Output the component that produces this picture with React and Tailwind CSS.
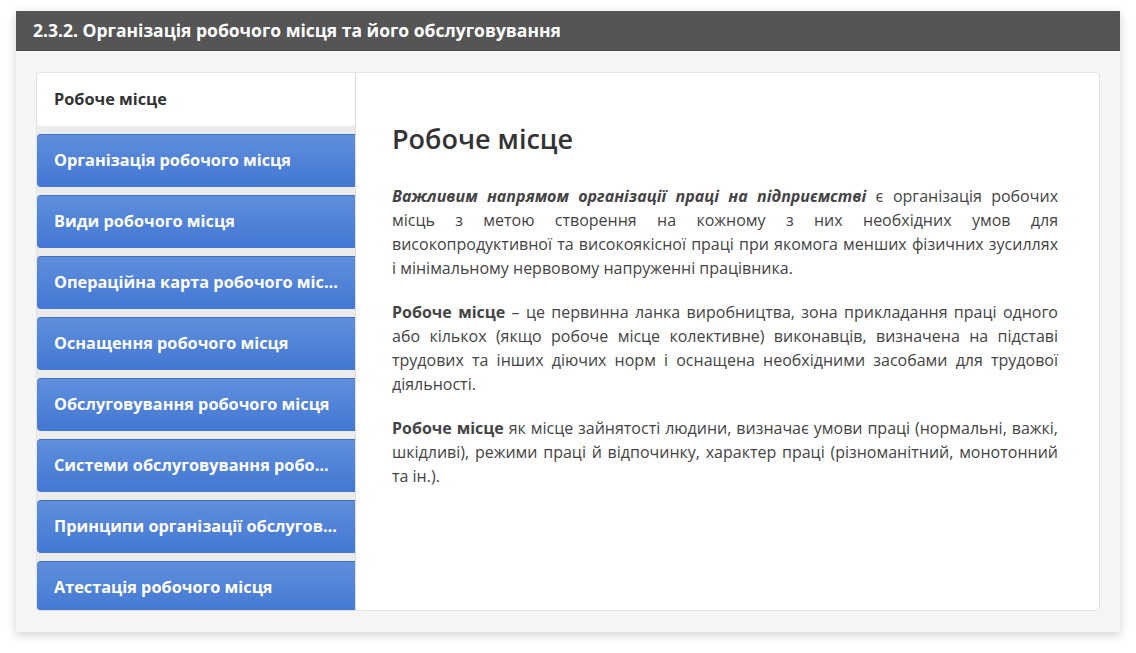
const tabs = [
  'Організація робочого місця',
  'Види робочого місця',
  'Операційна карта робочого місця',
  'Оснащення робочого місця',
  'Обслуговування робочого місця',
  'Системи обслуговування робочих місць',
  'Принципи організації обслуговування',
  'Атестація робочого місця',
];

export default function App() {
  return (
    <div className="min-h-screen bg-white pt-[11px] px-4 pb-5" style={{ fontFamily: '"Open Sans", "Noto Sans", sans-serif' }}>
      <div className="w-[1104px] bg-[#f5f5f5] shadow-[0_3px_10px_rgba(0,0,0,0.18)]">
        <div className="h-10 bg-[#555555] flex items-center px-[17px] border-b border-[#4a4a4a]">
          <h2 className="text-white font-bold text-[17.5px]">2.3.2. Організація робочого місця та його обслуговування</h2>
        </div>
        <div className="px-5 pt-[21px] pb-[21px]">
          <div className="flex bg-white border border-[#e3e3e3] rounded h-[539px] overflow-hidden">
            <div className="w-[319px] shrink-0 bg-[#ebebeb] flex flex-col border-r border-[#dcdcdc]">
              <div className="h-[53px] shrink-0 bg-white flex items-center px-[17px] text-[16.3px] font-bold text-[#333]">Робоче місце</div>
              <div className="flex flex-col gap-2 pt-2">
                {tabs.map((t) => (
                  <div key={t} className="h-[53px] shrink-0 flex items-center px-[17px] pb-[2px] rounded-l-[4px] border-t border-[#3f6fc6] bg-gradient-to-b from-[#5f8edb] to-[#4377d3] text-white font-bold text-[16.3px] whitespace-nowrap overflow-hidden">
                    <span className="truncate">{t}</span>
                  </div>
                ))}
              </div>
            </div>
            <div className="flex-1 pl-9 pr-[41px] pt-[50px] text-[#444] text-[16px] leading-6">
              <h1 className="text-[27px] font-semibold text-[#333] leading-8 mb-[29px]">Робоче місце</h1>
              <p className="text-justify mb-5">
                <b><i>Важливим напрямом організації праці на підприємстві</i></b> є організація робочих місць з метою створення на кожному з них необхідних умов для високопродуктивної та високоякісної праці при якомога менших фізичних зусиллях і мінімальному нервовому напруженні працівника.
              </p>
              <p className="text-justify mb-5">
                <b>Робоче місце</b> – це первинна ланка виробництва, зона прикладання праці одного або кількох (якщо робоче місце колективне) виконавців, визначена на підставі трудових та інших діючих норм і оснащена необхідними засобами для трудової діяльності.
              </p>
              <p className="text-justify">
                <b>Робоче місце</b> як місце зайнятості людини, визначає умови праці (нормальні, важкі, шкідливі), режими праці й відпочинку, характер праці (різноманітний, монотонний та ін.).
              </p>
            </div>
          </div>
        </div>
      </div>
    </div>
  );
}
